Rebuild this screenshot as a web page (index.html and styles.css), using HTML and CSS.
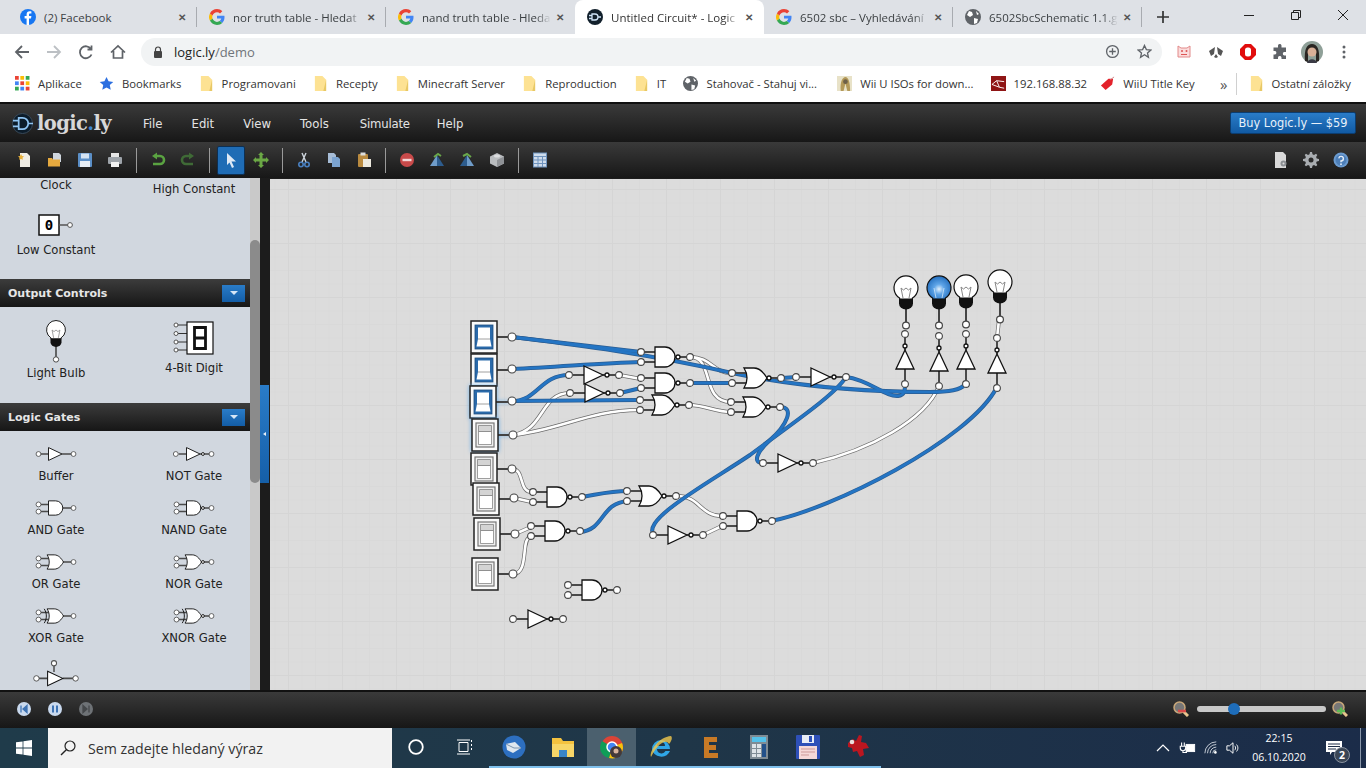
FILE: index.html
```html
<!DOCTYPE html>
<html lang="en">

<head>
    <meta charset="UTF-8">
    <title>Untitled Circuit* - Logic.ly</title>
    <link rel="stylesheet" href="styles.css">
</head>

<body>
    <!-- browser tabs -->
    <div class="tabbar">
        <div class="tab sep">
            <svg class="fav" viewBox="0 0 16 16"><circle cx="8" cy="8" r="8" fill="#1877f2"/><path d="M9 16V9.500h2l.4-2.400H9V5.800c0-.8.3-1.200 1.200-1.200h1.200V2.500C11 2.400 10.400 2.300 9.700 2.300 7.800 2.300 6.600 3.500 6.600 5.500v1.600H4.600v2.400h2V16z" fill="#fff"/></svg>
            <span class="tab-title plain">(2) Facebook</span><span class="tab-x">✕</span>
        </div>
        <div class="tab sep">
            <svg class="fav"><use href="#ic-google"/></svg>
            <span class="tab-title">nor truth table - Hledat</span><span class="tab-x">✕</span>
        </div>
        <div class="tab">
            <svg class="fav"><use href="#ic-google"/></svg>
            <span class="tab-title">nand truth table - Hleda</span><span class="tab-x">✕</span>
        </div>
        <div class="tab active">
            <svg class="fav" viewBox="0 0 16 16"><circle cx="8" cy="8" r="8" fill="#12202c"/><path d="M2 6.500h3M2 9.500h3M5 5h3a3 3 0 0 1 0 6H5zM11 8h3" fill="none" stroke="#cfe4f7" stroke-width="1.300"/></svg>
            <span class="tab-title">Untitled Circuit* - Logic</span><span class="tab-x">✕</span>
        </div>
        <div class="tab sep">
            <svg class="fav"><use href="#ic-google"/></svg>
            <span class="tab-title">6502 sbc – Vyhledávání</span><span class="tab-x">✕</span>
        </div>
        <div class="tab sep">
            <svg class="fav"><use href="#ic-globe"/></svg>
            <span class="tab-title">6502SbcSchematic 1.1.g</span><span class="tab-x">✕</span>
        </div>
        <svg class="tab-new" viewBox="0 0 12 12"><path d="M6 0v12M0 6h12" stroke="#333" stroke-width="1.700" fill="none"/></svg>
        <div class="win-btns">
            <svg viewBox="0 0 12 12"><path d="M1 6.500h10" stroke="#222" fill="none"/></svg>
            <svg viewBox="0 0 12 12"><path d="M1.500 3.500h7v7h-7zM3.500 3.500v-2h7v7h-2" stroke="#222" fill="none"/></svg>
            <svg viewBox="0 0 12 12"><path d="M1 1l10 10M11 1L1 11" stroke="#222" fill="none"/></svg>
        </div>
    </div>

    <!-- address bar -->
    <div class="navbar">
        <svg class="nav-ic" viewBox="0 0 16 16"><path d="M15 8H2M8 2L2 8l6 6" fill="none" stroke="#5f6368" stroke-width="1.800"/></svg>
        <svg class="nav-ic" viewBox="0 0 16 16"><path d="M1 8h13M8 2l6 6-6 6" fill="none" stroke="#bcc0c4" stroke-width="1.800"/></svg>
        <svg class="nav-ic" viewBox="0 0 16 16"><path d="M13.500 10.500A6 6 0 1 1 13 5M13.500 1.500V5.500H9.500" fill="none" stroke="#5f6368" stroke-width="1.800"/></svg>
        <svg class="nav-ic" viewBox="0 0 16 16"><path d="M1 8.500L8 2l7 6.500M3.500 7v7h9V7" fill="none" stroke="#5f6368" stroke-width="1.700"/></svg>
        <div class="omnibox">
            <svg class="lock" viewBox="0 0 10 12"><path d="M2.500 5V3.500a2.500 2.500 0 0 1 5 0V5" fill="none" stroke="#444" stroke-width="1.200"/><rect x="1" y="5" width="8" height="7" rx="1" fill="#444"/></svg>
            <span class="url"><b>logic.ly</b>/demo</span>
            <svg class="omni-ic" viewBox="0 0 16 16"><circle cx="8" cy="8" r="6.300" fill="none" stroke="#5f6368" stroke-width="1.400"/><path d="M8 4.500v7M4.500 8h7" stroke="#5f6368" stroke-width="1.400"/></svg>
            <svg class="omni-ic star" viewBox="0 0 16 16"><path d="M8 1.500l2 4.400 4.800.5-3.600 3.200 1 4.700L8 11.500l-4.200 2.800 1-4.700L1.200 6.400 6 5.900z" fill="none" stroke="#5f6368" stroke-width="1.400"/></svg>
        </div>
        <div class="ext-icons">
            <svg viewBox="0 0 16 16"><path d="M2 2l3 2h6l3-2v11H2z" fill="#fbdcdc" stroke="#e28a8a"/><circle cx="6" cy="7" r="1" fill="#d55"/><circle cx="10.500" cy="7" r="1" fill="#d55"/><path d="M5 10.500h6" stroke="#d55"/></svg>
            <svg viewBox="0 0 16 16"><path d="M7 3L1 7l2 5 3-2zM9 3l6 4-2 5-3-2zM8 10l-2 3 2 1 2-1z" fill="#555"/></svg>
            <svg viewBox="0 0 16 16"><path d="M5 0h6l5 5v6l-5 5H5l-5-5V5z" fill="#e10d0d"/><rect x="5" y="3.500" width="6" height="9" rx="2.500" fill="#fff"/></svg>
            <svg viewBox="0 0 16 16"><path d="M6 1.500a1.800 1.800 0 0 1 3.500 0V3.500H14V8h-1.800a1.800 1.800 0 0 0 0 3.500H14V15H9.500v-1.500a1.800 1.800 0 0 0-3.500 0V15H1.500v-4.500H3a1.800 1.800 0 0 0 0-3.500H1.500V3.500H6z" fill="#5f6368"/></svg>
            <svg class="avatar" viewBox="0 0 22 22"><circle cx="11" cy="11" r="11" fill="#8fa098"/><path d="M4 20C3 8 6 3 11 3s8 5 7 17l-3 1V9H7v12z" fill="#2a2622"/><circle cx="11" cy="11" r="4.500" fill="#d9b097"/><path d="M6 22c1-5 9-5 10 0z" fill="#3a3a44"/></svg>
            <svg viewBox="0 0 16 16"><circle cx="8" cy="3" r="1.500" fill="#5f6368"/><circle cx="8" cy="8" r="1.500" fill="#5f6368"/><circle cx="8" cy="13" r="1.500" fill="#5f6368"/></svg>
        </div>
    </div>

    <!-- bookmarks -->
    <div class="bookmarks">
        <span class="bm"><svg viewBox="0 0 14 14"><g><rect width="3.500" height="3.500" fill="#ea4335"/><rect x="5" width="3.500" height="3.500" fill="#fbbc05"/><rect x="10" width="3.500" height="3.500" fill="#34a853"/><rect y="5" width="3.500" height="3.500" fill="#4285f4"/><rect x="5" y="5" width="3.500" height="3.500" fill="#ea4335"/><rect x="10" y="5" width="3.500" height="3.500" fill="#fbbc05"/><rect y="10" width="3.500" height="3.500" fill="#34a853"/><rect x="5" y="10" width="3.500" height="3.500" fill="#4285f4"/><rect x="10" y="10" width="3.500" height="3.500" fill="#ea4335"/></g></svg>Aplikace</span>
        <span class="bm"><svg viewBox="0 0 16 16"><path d="M8 1l2.200 4.700 5 .6-3.700 3.400 1 5L8 12.300l-4.500 2.400 1-5L.8 6.300l5-.6z" fill="#2c6fe0"/></svg>Bookmarks</span>
        <span class="bm"><svg><use href="#ic-folder"/></svg>Programovani</span>
        <span class="bm"><svg><use href="#ic-folder"/></svg>Recepty</span>
        <span class="bm"><svg><use href="#ic-folder"/></svg>Minecraft Server</span>
        <span class="bm"><svg><use href="#ic-folder"/></svg>Reproduction</span>
        <span class="bm"><svg><use href="#ic-folder"/></svg>IT</span>
        <span class="bm bm-long"><svg><use href="#ic-globe"/></svg>Stahovač - Stahuj vi...</span>
        <span class="bm"><svg viewBox="0 0 16 16"><rect width="16" height="16" fill="#e8e2c8"/><path d="M4 16C3 6 6 1 9 1s5 5 5 15h-3L9 8l-2 8z" fill="#b49a5a"/><circle cx="9" cy="6" r="2.500" fill="#6d6049"/></svg>Wii U ISOs for down...</span>
        <span class="bm"><svg viewBox="0 0 16 16"><rect width="16" height="16" fill="#8f1515"/><path d="M1 9l5-4 8 1M6 5l3 7 5 1M1 9l8 3" fill="none" stroke="#fff" stroke-width="1"/></svg>192.168.88.32</span>
        <span class="bm bm-tag"><svg viewBox="0 0 16 16"><path d="M1 10l8-7 5 0-1 6-7 6z" fill="#e3222b"/><path d="M11 4l4-3" stroke="#c88" stroke-width="1"/></svg>WiiU Title Key</span>
        <span class="bm-more">»</span>
        <span class="bm bm-other"><svg><use href="#ic-folder"/></svg>Ostatní záložky</span>
    </div>

    <!-- app -->
    <div class="app-header">
        <div class="logo">
            <svg viewBox="0 0 22 22"><circle cx="11" cy="11" r="10.500" fill="#0c1c2a" stroke="#3a4c5c"/><path d="M1 8h6M1 14h6M7 5h4a6 6 0 0 1 0 12H7zM17 11h5" fill="none" stroke="#8fc4f2" stroke-width="1.800"/></svg>
            <span class="logo-text">logic<em>.</em>ly</span>
        </div>
        <nav class="menu"><span>File</span><span>Edit</span><span>View</span><span>Tools</span><span class="menu-sim">Simulate</span><span>Help</span></nav>
        <button class="buy" type="button">Buy Logic.ly — $59</button>
    </div>

    <div class="app-tools">
        <svg class="tool" viewBox="0 0 16 16"><path d="M3 1h7l3 3v11H3z" fill="#f0ede4"/><path d="M4 2l1 2 2 .3-1.500 1.500.4 2L4 7l-1.900.8.4-2L1 4.300 3 4z" fill="#e8b13a"/></svg>
        <svg class="tool" viewBox="0 0 16 16"><path d="M6 1h6l2 2v7H6z" fill="#cfd6de"/><path d="M1 6h4l1 1.500h7v7H1z" fill="#e5a93f"/></svg>
        <svg class="tool" viewBox="0 0 16 16"><rect x="1" y="1" width="14" height="14" rx="1" fill="#5b8fc7"/><rect x="4" y="1.500" width="8" height="5" fill="#d5e3f2"/><rect x="3" y="9" width="10" height="6" fill="#e7edf4"/></svg>
        <svg class="tool" viewBox="0 0 16 16"><rect x="4" y="1" width="8" height="5" fill="#e6e6e6"/><rect x="1" y="5" width="14" height="7" rx="1" fill="#9ea4aa"/><rect x="4" y="10" width="8" height="5" fill="#f2f2f2"/></svg>
        <i class="tool-sep"></i>
        <svg class="tool" viewBox="0 0 16 16"><path d="M5 4h5a4 4 0 0 1 0 8H3" fill="none" stroke="#5aa341" stroke-width="2.600"/><path d="M7 .500L2 4l5 3.500z" fill="#5aa341"/></svg>
        <svg class="tool" viewBox="0 0 16 16"><path d="M11 4H6a4 4 0 0 0 0 8h7" fill="none" stroke="#3f6a36" stroke-width="2.600"/><path d="M9 .500L14 4 9 7.500z" fill="#3f6a36"/></svg>
        <i class="tool-sep"></i>
        <span class="tool-on"><svg viewBox="0 0 16 16"><path d="M4 1l9 8.500H8.500L11 15l-2 1-2.500-5.500L4 13z" fill="#dfe9f5"/></svg></span>
        <svg class="tool" viewBox="0 0 16 16"><path d="M8 0l3 3H9.500v3.500H13V5l3 3-3 3V9.500H9.500V13H11l-3 3-3-3h1.500V9.500H3V11L0 8l3-3v1.500h3.500V3H5z" fill="#6ba845"/></svg>
        <i class="tool-sep"></i>
        <svg class="tool" viewBox="0 0 16 16"><path d="M10 1L6 10M6 1l4 9" stroke="#cfd6de" stroke-width="1.400"/><circle cx="5" cy="12.500" r="2.200" fill="none" stroke="#4a80c0" stroke-width="1.600"/><circle cx="11" cy="12.500" r="2.200" fill="none" stroke="#4a80c0" stroke-width="1.600"/></svg>
        <svg class="tool" viewBox="0 0 16 16"><path d="M2 1h6l2 2v8H2z" fill="#a6bcd6"/><path d="M6 5h6l2 2v8H6z" fill="#7ba3d0"/></svg>
        <svg class="tool" viewBox="0 0 16 16"><rect x="2" y="2" width="10" height="13" rx="1" fill="#b98a3f"/><rect x="4.500" y="0.500" width="5" height="3" fill="#ddd"/><rect x="7" y="7" width="8" height="8" fill="#ece9df"/></svg>
        <i class="tool-sep"></i>
        <svg class="tool" viewBox="0 0 16 16"><circle cx="8" cy="8" r="7" fill="#c84a4a"/><rect x="3.500" y="6.800" width="9" height="2.400" fill="#f3d9d9"/></svg>
        <svg class="tool" viewBox="0 0 16 16"><path d="M1 14L8 3v11z" fill="#6f9cc9"/><path d="M15 14L8 3v11z" fill="#2d5c8d"/><path d="M5 5l4-3 3 2" fill="none" stroke="#6aa84a" stroke-width="2"/></svg>
        <svg class="tool" viewBox="0 0 16 16"><path d="M1 14L8 3v11z" fill="#2d5c8d"/><path d="M15 14L8 3v11z" fill="#6f9cc9"/><path d="M4 4l4-2 4 3" fill="none" stroke="#6aa84a" stroke-width="2"/></svg>
        <svg class="tool" viewBox="0 0 16 16"><path d="M8 1l7 3.500v7L8 15l-7-3.500v-7z" fill="#b9bcbf"/><path d="M8 8l7-3.500v7L8 15z" fill="#8f9296"/><ellipse cx="8" cy="4" rx="3" ry="1.500" fill="#dcdddf"/></svg>
        <i class="tool-sep"></i>
        <svg class="tool" viewBox="0 0 16 16"><rect x="1.500" y="1" width="13" height="14" fill="#cfdcec" stroke="#6f93bd"/><path d="M1.500 4.500h13M1.500 8h13M1.500 11.500h13M6 4.500V15M10.500 4.500V15" stroke="#6f93bd"/></svg>
        <div class="tools-right">
            <svg class="tool" viewBox="0 0 16 16"><path d="M2 0h8l3 3v13H2z" fill="#d9d9d9"/><circle cx="10.500" cy="11.500" r="3" fill="#8b8f93"/><circle cx="10.500" cy="11.500" r="1" fill="#ddd"/></svg>
            <svg class="tool" viewBox="0 0 16 16"><path d="M7 0h2l.5 2.300 1.500.6L13 1.700 14.300 3l-1.200 2 .6 1.500L16 7v2l-2.300.5-.6 1.500 1.200 2L13 14.300l-2-1.200-1.500.6L9 16H7l-.5-2.300-1.500-.6-2 1.200L1.700 13l1.200-2-.6-1.500L0 9V7l2.300-.5.6-1.500-1.200-2L3 1.700l2 1.200 1.500-.6z" fill="#a9adb1"/><circle cx="8" cy="8" r="2.500" fill="#2a2a2a"/></svg>
            <svg class="tool" viewBox="0 0 16 16"><circle cx="8" cy="8" r="7.500" fill="#6b9bd0"/><circle cx="8" cy="8" r="5.500" fill="#4c7eb8"/><path d="M5.800 6.300A2.300 2.300 0 1 1 8 9v1.200" fill="none" stroke="#e5eef8" stroke-width="1.400"/><circle cx="8" cy="12.200" r=".9" fill="#e5eef8"/></svg>
        </div>
    </div>

    <div class="workspace">
        <aside class="palette">
            <div class="pal-grid pal-top">
                <div class="pal-item clock"><span>Clock</span></div>
                <div class="pal-item high"><span>High Constant</span></div>
                <div class="pal-item low">
                    <svg class="const-ic" viewBox="0 0 36 22"><rect x="1" y="1" width="20" height="20" fill="#fff" stroke="#111" stroke-width="1.500"/><path d="M21 11h9" stroke="#555" stroke-width="1.500"/><circle cx="32" cy="11" r="2.400" fill="#fff" stroke="#555"/><text x="11" y="16" class="const-txt">0</text></svg>
                    <span>Low Constant</span>
                </div>
            </div>

            <h2 class="pal-head">Output Controls<i class="pal-toggle"></i></h2>
            <div class="pal-grid pal-output">
                <div class="pal-item bulb-item">
                    <svg class="bulb-ic" viewBox="-14 -14 28 56"><use href="#g-bulb"/></svg>
                    <span>Light Bulb</span>
                </div>
                <div class="pal-item digit-item">
                    <svg class="digit-ic" viewBox="0 0 42 34"><g stroke="#333"><path d="M4 4h10M4 12.500h10M4 21h10M4 29h10"/></g><g fill="#fff" stroke="#555"><circle cx="3" cy="4" r="2"/><circle cx="3" cy="12.500" r="2"/><circle cx="3" cy="21" r="2"/><circle cx="3" cy="29" r="2"/></g><rect x="14" y="1" width="26" height="32" fill="#fff" stroke="#111" stroke-width="1.200"/><path d="M21.500 6.500h11v10.500h-11zM21.500 17h11v10.500h-11z" fill="none" stroke="#111" stroke-width="2.800"/></svg>
                    <span>4-Bit Digit</span>
                </div>
            </div>

            <h2 class="pal-head">Logic Gates<i class="pal-toggle"></i></h2>
            <div class="pal-grid pal-gates">
                <div class="pal-item"><svg class="gate-ic" viewBox="-24.500 -14 70 28"><use href="#g-buffer"/></svg><span>Buffer</span></div>
                <div class="pal-item"><svg class="gate-ic" viewBox="-24.500 -14 70 28"><use href="#g-not"/></svg><span>NOT Gate</span></div>
                <div class="pal-item"><svg class="gate-ic" viewBox="-24.500 -14 70 28"><use href="#g-and"/></svg><span>AND Gate</span></div>
                <div class="pal-item"><svg class="gate-ic" viewBox="-24.500 -14 70 28"><use href="#g-nand"/></svg><span>NAND Gate</span></div>
                <div class="pal-item"><svg class="gate-ic" viewBox="-24.500 -14 70 28"><use href="#g-or"/></svg><span>OR Gate</span></div>
                <div class="pal-item"><svg class="gate-ic" viewBox="-24.500 -14 70 28"><use href="#g-nor"/></svg><span>NOR Gate</span></div>
                <div class="pal-item"><svg class="gate-ic" viewBox="-24.500 -14 70 28"><use href="#g-xor"/></svg><span>XOR Gate</span></div>
                <div class="pal-item"><svg class="gate-ic" viewBox="-24.500 -14 70 28"><use href="#g-xnor"/></svg><span>XNOR Gate</span></div>
                <div class="pal-item"><svg class="tri-ic" viewBox="-24.500 -24 70 42"><use href="#g-buffer"/><path d="M8 -8V-17" stroke="#555" stroke-width="2"/><circle cx="8" cy="-19" r="3.200" fill="#fff" stroke="#555" stroke-width="1.300"/></svg></div>
            </div>
        </aside>
        <div class="pal-scroll"><i class="pal-thumb"></i></div>
        <div class="divider"><i class="divider-handle"></i></div>

        <main class="canvas">
            <svg class="circuit" viewBox="270 179 1096 511">
                <defs>
                    <!-- shared favicons -->
                    <symbol id="ic-google" viewBox="0 0 16 16">
                        <path d="M15.500 8.200c0-.6 0-1-.1-1.500H8v2.900h4.300c-.2 1-.7 1.800-1.600 2.400l2.500 1.900c1.500-1.400 2.300-3.400 2.300-5.700z" fill="#4285f4"/>
                        <path d="M8 16c2.200 0 4-.7 5.200-2l-2.500-1.900c-.7.500-1.600.8-2.700.8-2.100 0-3.900-1.400-4.500-3.300L.9 11.600C2.200 14.200 4.900 16 8 16z" fill="#34a853"/>
                        <path d="M3.500 9.600a4.800 4.800 0 0 1 0-3.100L.9 4.400a8 8 0 0 0 0 7.200z" fill="#fbbc05"/>
                        <path d="M8 3.200c1.200 0 2.200.4 3 1.200l2.300-2.200C11.900.8 10.100 0 8 0 4.900 0 2.200 1.800.9 4.400l2.600 2.100C4.100 4.600 5.900 3.200 8 3.200z" fill="#ea4335"/>
                    </symbol>
                    <symbol id="ic-globe" viewBox="0 0 16 16">
                        <circle cx="8" cy="8" r="8" fill="#5f6368"/>
                        <path d="M4 2l3 1 1 3-3 2-3-2zM9 9l4 1-1 4-3 1zM11 2l3 3-2 1z" fill="#fff"/>
                    </symbol>
                    <symbol id="ic-folder" viewBox="0 0 16 16">
                        <path d="M2 0h8l4 4v12H2z" fill="#fde293"/>
                        <path d="M14 4v12H11z" fill="#e8c865"/>
                    </symbol>

                    <!-- circuit parts, origin is the middle of the gate's left edge -->
                    <path id="b-and" d="M0 -10h10a10 10 0 0 1 0 20H0z"/>
                    <path id="b-or" d="M-2 -10h10c6 0 10 5 13 10-3 5-7 10-13 10H-2c4-6 4-14 0-20z"/>

                    <g id="g-buffer" class="part">
                        <path class="stub" d="M-11 0H0M19 0h14"/>
                        <path class="body" d="M0 -9L19 0 0 9z"/>
                        <circle class="pin" cx="-14" cy="0" r="3.400"/>
                        <circle class="pin" cx="35" cy="0" r="3.400"/>
                    </g>
                    <g id="g-not" class="part">
                        <path class="stub" d="M-11 0H0M19 0h14"/>
                        <path class="body" d="M0 -9L19 0 0 9z"/>
                        <circle class="bubble" cx="23" cy="0" r="2"/>
                        <circle class="pin" cx="-15" cy="0" r="3.400"/>
                        <circle class="pin" cx="35" cy="0" r="3.400"/>
                    </g>
                    <g id="g-and" class="part">
                        <path class="stub" d="M-11 -5H2M-11 5H2M20 0h13"/>
                        <use href="#b-and" class="body"/>
                        <circle class="pin" cx="-14" cy="-5" r="3.400"/>
                        <circle class="pin" cx="-14" cy="5" r="3.400"/>
                        <circle class="pin" cx="35" cy="0" r="3.400"/>
                    </g>
                    <g id="g-nand" class="part">
                        <path class="stub" d="M-11 -5H2M-11 5H2M20 0h13"/>
                        <use href="#b-and" class="body"/>
                        <circle class="bubble" cx="23" cy="0" r="2"/>
                        <circle class="pin" cx="-14" cy="-5" r="3.400"/>
                        <circle class="pin" cx="-14" cy="5" r="3.400"/>
                        <circle class="pin" cx="35" cy="0" r="3.400"/>
                    </g>
                    <g id="g-or" class="part">
                        <path class="stub" d="M-11 -5H2M-11 5H2M20 0h13"/>
                        <use href="#b-or" class="body"/>
                        <circle class="pin" cx="-14" cy="-5" r="3.400"/>
                        <circle class="pin" cx="-14" cy="5" r="3.400"/>
                        <circle class="pin" cx="35" cy="0" r="3.400"/>
                    </g>
                    <g id="g-nor" class="part">
                        <path class="stub" d="M-11 -5H2M-11 5H2M20 0h13"/>
                        <use href="#b-or" class="body"/>
                        <circle class="bubble" cx="23" cy="0" r="2"/>
                        <circle class="pin" cx="-14" cy="-5" r="3.400"/>
                        <circle class="pin" cx="-14" cy="5" r="3.400"/>
                        <circle class="pin" cx="35" cy="0" r="3.400"/>
                    </g>
                    <g id="g-xor" class="part">
                        <path class="stub" d="M-11 -5H2M-11 5H2M20 0h13"/>
                        <path class="arc" d="M-6 -10c4 6 4 14 0 20"/>
                        <use href="#b-or" class="body"/>
                        <circle class="pin" cx="-14" cy="-5" r="3.400"/>
                        <circle class="pin" cx="-14" cy="5" r="3.400"/>
                        <circle class="pin" cx="35" cy="0" r="3.400"/>
                    </g>
                    <g id="g-xnor" class="part">
                        <path class="stub" d="M-11 -5H2M-11 5H2M20 0h13"/>
                        <path class="arc" d="M-6 -10c4 6 4 14 0 20"/>
                        <use href="#b-or" class="body"/>
                        <circle class="bubble" cx="23" cy="0" r="2"/>
                        <circle class="pin" cx="-14" cy="-5" r="3.400"/>
                        <circle class="pin" cx="-14" cy="5" r="3.400"/>
                        <circle class="pin" cx="35" cy="0" r="3.400"/>
                    </g>
                    <!-- bulb, origin at centre of the glass -->
                    <g id="g-bulb">
                        <path d="M0 20V36" stroke="#444" stroke-width="2"/>
                        <path d="M-6.500 10a12 12 0 1 1 13 0l-.5 2h-12z" fill="#fff" stroke="#111" stroke-width="1.200"/>
                        <path d="M-5 0l2 10M5 0l-2 10M-5 0l2.500 2 2.500-2 2.500 2L5 0" fill="none" stroke="#888"/>
                        <path d="M-7 10.500h14v5a7 6 0 0 1-14 0z" fill="#111"/>
                        <circle cx="0" cy="37.500" r="3.400" fill="#fff" stroke="#444" stroke-width="1.200"/>
                    </g>
                    <radialGradient id="glow" cx=".5" cy=".55" r=".6">
                        <stop offset="0" stop-color="#e2f0fc"/>
                        <stop offset=".35" stop-color="#5fa5e8"/>
                        <stop offset="1" stop-color="#1a66b8"/>
                    </radialGradient>
                    <g id="g-bulb-on">
                        <path d="M0 20V36" stroke="#444" stroke-width="2"/>
                        <path d="M-6.500 10a12 12 0 1 1 13 0l-.5 2h-12z" fill="url(#glow)" stroke="#111" stroke-width="1.200"/>
                        <path d="M-5 0l2 10M5 0l-2 10" fill="none" stroke="#cfe4f8" stroke-width=".8"/>
                        <path d="M-7 10.500h14v5a7 6 0 0 1-14 0z" fill="#111"/>
                        <circle cx="0" cy="37.500" r="3.400" fill="#fff" stroke="#444" stroke-width="1.200"/>
                    </g>
                    <!-- switches, origin at top left of the box -->
                    <g id="g-sw-on">
                        <path d="M27 17H40" stroke="#444" stroke-width="2"/>
                        <rect x="1" y="1" width="26" height="32" fill="#fafafa" stroke="#222" stroke-width="1.500"/>
                        <rect x="5" y="5" width="18" height="24" fill="#2a6aaa" stroke="#1d4d7e" stroke-width=".8"/>
                        <path d="M8 7.500h12v11.500l1.500 7.500h-15l1.500-7.500z" fill="#fff"/>
                        <path d="M8 19h12" stroke="#888" stroke-width=".8"/>
                    </g>
                    <g id="g-sw-off">
                        <path d="M27 17H40" stroke="#444" stroke-width="2"/>
                        <rect x="1" y="1" width="26" height="32" fill="#fafafa" stroke="#222" stroke-width="1.500"/>
                        <rect x="5" y="5" width="18" height="24" fill="#efefef" stroke="#777" stroke-width="1.200"/>
                        <path d="M7.500 7.500h13v6h-13z" fill="#d4d4d4" stroke="#777" stroke-width=".7"/>
                        <path d="M7.500 13.500h13v13h-13z" fill="#fff" stroke="#777" stroke-width=".7"/>
                    </g>

                    <!-- wires -->
                    <g id="wires-on">
                        <path d="M512 337L641 352"/>
                        <path d="M512 337C560 343 640 352 732 373C790 385 860 392 930 392C950 392 960 390 966 384"/>
                        <path d="M512 369C560 367 600 363 641 362"/>
                        <path d="M512 401L639 400"/>
                        <path d="M512 401C538 401 540 375 569 375"/>
                        <path d="M620 393L641 388"/>
                        <path d="M691 383L732 383"/>
                        <path d="M782 378L797 377"/>
                        <path d="M846 377C870 380 885 397 898 396C905 395 905 390 905 384"/>
                        <path d="M846 377C835 395 790 425 750 455C710 482 640 520 654 535"/>
                        <path d="M780 407C795 407 787 425 770 440C757 452 752 463 763 463"/>
                        <path d="M771 521C830 510 970 440 997 387"/>
                        <path d="M582 497C600 494 610 491 628 491"/>
                        <path d="M580 532C605 530 600 503 628 501"/>
                    </g>
                    <g id="wires-off">
                        <path d="M513 435C560 430 590 410 639 410"/>
                        <path d="M513 435C545 430 540 393 570 393"/>
                        <path d="M619 375L641 379"/>
                        <path d="M690 357C715 357 700 402 731 402"/>
                        <path d="M690 357C712 357 712 373 732 373"/>
                        <path d="M689 405C705 405 715 412 731 412"/>
                        <path d="M512 469C525 469 518 492 532 492"/>
                        <path d="M514 498L532 502"/>
                        <path d="M515 534L531 527"/>
                        <path d="M513 574C530 574 520 537 531 537"/>
                        <path d="M677 496C700 496 700 516 722 516"/>
                        <path d="M703 535L722 526"/>
                        <path d="M813 463C870 450 925 420 939 386"/>
                        <path d="M997 338L999 320"/>
                    </g>
                </defs>

                <use href="#wires-off" class="wire-off-case"/>
                <use href="#wires-off" class="wire-off"/>
                <use href="#wires-on" class="wire-on-case"/>
                <use href="#wires-on" class="wire-on"/>

                <use href="#g-sw-on" transform="translate(470 320)"/>
                <use href="#g-sw-on" transform="translate(470 353)"/>
                <use href="#g-sw-on" transform="translate(469 385)" class="sw-sel"/>
                <use href="#g-sw-off" transform="translate(471 418)" class="sw-sel"/>
                <use href="#g-sw-off" transform="translate(470 452)"/>
                <use href="#g-sw-off" transform="translate(472 482)"/>
                <use href="#g-sw-off" transform="translate(473 517)"/>
                <use href="#g-sw-off" transform="translate(471 557)"/>
                <circle class="pin big" cx="512" cy="337" r="4"/>
                <circle class="pin big" cx="512" cy="369" r="4"/>
                <circle class="pin big" cx="512" cy="401" r="4"/>
                <circle class="pin big" cx="513" cy="435" r="4"/>
                <circle class="pin big" cx="512" cy="469" r="4"/>
                <circle class="pin big" cx="514" cy="498" r="4"/>
                <circle class="pin big" cx="515" cy="534" r="4"/>
                <circle class="pin big" cx="513" cy="574" r="4"/>

                <use href="#g-nand" transform="translate(655 357)"/>
                <use href="#g-nand" transform="translate(655 383)"/>
                <use href="#g-nor" transform="translate(654 405)"/>
                <use href="#g-not" transform="translate(584 375)"/>
                <use href="#g-not" transform="translate(585 393)"/>
                <use href="#g-nor" transform="translate(746 378)"/>
                <use href="#g-nor" transform="translate(745 407)"/>
                <use href="#g-not" transform="translate(811 377)"/>
                <use href="#g-not" transform="translate(778 463)"/>
                <use href="#g-nand" transform="translate(547 497)"/>
                <use href="#g-nand" transform="translate(545 531)"/>
                <use href="#g-nor" transform="translate(641 496)"/>
                <use href="#g-nand" transform="translate(737 521)"/>
                <use href="#g-not" transform="translate(668 535)"/>
                <use href="#g-nand" transform="translate(582 590)"/>
                <use href="#g-not" transform="translate(528 619)"/>

                <use href="#g-not" transform="translate(905 369) rotate(-90)"/>
                <use href="#g-not" transform="translate(939 371) rotate(-90)"/>
                <use href="#g-not" transform="translate(966 369) rotate(-90)"/>
                <use href="#g-not" transform="translate(997 373) rotate(-90)"/>
                <use href="#g-bulb" transform="translate(906 288)"/>
                <use href="#g-bulb-on" transform="translate(939 288)"/>
                <use href="#g-bulb" transform="translate(966 287)"/>
                <use href="#g-bulb" transform="translate(1000 282)"/>
            </svg>
        </main>
    </div>

    <div class="app-footer">
        <svg class="play" viewBox="0 0 14 14"><circle cx="7" cy="7" r="7" fill="#c9d9ee"/><path d="M4 3.500v7M10 3.500L6 7l4 3.500z" stroke="#3e73b3" stroke-width="1.300" fill="#3e73b3"/></svg>
        <svg class="play" viewBox="0 0 14 14"><circle cx="7" cy="7" r="7" fill="#c9d9ee"/><path d="M5 3.500v7M9 3.500v7" stroke="#3e73b3" stroke-width="2"/></svg>
        <svg class="play" viewBox="0 0 14 14"><circle cx="7" cy="7" r="7" fill="#6e7276"/><path d="M10 3.500v7M4 3.500L8 7l-4 3.500z" stroke="#45484b" stroke-width="1.300" fill="#45484b"/></svg>
        <div class="zoom-ctl">
            <svg class="zoom-ic" viewBox="0 0 16 16"><path d="M10 10l5 5" stroke="#e8c58e" stroke-width="3"/><circle cx="6.500" cy="6.500" r="5.500" fill="#777" stroke="#c8a77a" stroke-width="1.500"/><path d="M5 10h8" stroke="#d84848" stroke-width="2.600"/></svg>
            <div class="zoom-track"><i class="zoom-thumb"></i></div>
            <svg class="zoom-ic plus" viewBox="0 0 16 16"><path d="M10 10l5 5" stroke="#e8c58e" stroke-width="3"/><circle cx="6.500" cy="6.500" r="5.500" fill="#777" stroke="#c8a77a" stroke-width="1.500"/><path d="M5 10h8M9 6.500v7" stroke="#5dbb55" stroke-width="2.400"/></svg>
        </div>
    </div>

    <!-- windows taskbar -->
    <footer class="taskbar">
        <svg class="win-logo" viewBox="0 0 16 16"><path d="M0 2.300L6.600 1.400V7.600H0zM7.400 1.300L16 0V7.600H7.400zM0 8.400H6.600V14.600L0 13.700zM7.400 8.400H16V16L7.400 14.700z" fill="#fff"/></svg>
        <div class="search">
            <svg viewBox="0 0 16 16"><circle cx="10" cy="6" r="5" fill="none" stroke="#222" stroke-width="1.200"/><path d="M6.300 9.700L1 15" stroke="#222" stroke-width="1.400"/></svg>
            <span>Sem zadejte hledaný výraz</span>
        </div>
        <div class="task-apps">
            <span class="task"><svg viewBox="0 0 16 16"><circle cx="8" cy="8" r="6.800" fill="none" stroke="#fff" stroke-width="1.800"/></svg></span>
            <span class="task"><svg viewBox="0 0 16 16"><path d="M2 3.500h9v9H2zM0 1h13M0 15h13M14.500 1v2M14.500 5v2M14.500 9v2" fill="none" stroke="#fff"/></svg></span>
            <span class="task on"><svg class="big" viewBox="0 0 24 24"><circle cx="12" cy="12" r="11.500" fill="#2d6fc0"/><path d="M4 9l9-2 6 6-8 5-6-3z" fill="#dfe7ef"/><path d="M4 9l8 4 7 0" fill="none" stroke="#7a93ad"/></svg></span>
            <span class="task on"><svg class="big" viewBox="0 0 24 24"><path d="M1 3h9l2 3h11v16H1z" fill="#f4c23f"/><path d="M1 9h22v13H1z" fill="#f7d668"/><rect x="8" y="15" width="8" height="7" fill="#3a86c8"/></svg></span>
            <span class="task on current"><svg class="big" viewBox="0 0 24 24"><circle cx="12" cy="12" r="11" fill="#dc4437"/><path d="M12 12L22 8A11 11 0 0 1 9 23z" fill="#f4c20d"/><path d="M12 12L9 23A11 11 0 0 1 2 6z" fill="#0f9d58"/><circle cx="12" cy="12" r="5" fill="#4285f4" stroke="#fff" stroke-width="1.500"/><circle cx="16" cy="17" r="6" fill="#43393a"/><circle cx="16" cy="16" r="2.500" fill="#d8b39c"/></svg></span>
            <span class="task on"><svg class="big" viewBox="0 0 24 24"><path d="M3 14a9 9 0 1 1 18 0H8a4.500 4.500 0 0 0 8.500 2H21a9.500 9.500 0 0 1-18-2zM8 11h8a4 4 0 0 0-8 0z" fill="#2fa6e6"/><path d="M2 22C0 16 10 2 22 1c2 2 0 6-2 8-1-3-8-6-18 13z" fill="#f2c94c" opacity=".8"/></svg></span>
            <span class="task on"><svg class="big" viewBox="0 0 24 24"><path d="M6 2h13v5h-8v3h7v5h-7v3h9v5H6z" fill="#c87a26"/></svg></span>
            <span class="task on"><svg class="big" viewBox="0 0 24 24"><rect x="3" y="0" width="18" height="24" fill="#7f8c95"/><rect x="5" y="2" width="14" height="5" fill="#54c1ea"/><path d="M5 9h4v4H5zM10 9h4v4h-4zM5 14h4v4H5zM10 14h4v4h-4zM5 19h4v3H5zM10 19h4v3h-4z" fill="#dde3e7"/><rect x="15" y="9" width="4" height="13" fill="#23518a"/></svg></span>
            <span class="task on"><svg class="big" viewBox="0 0 24 24"><rect width="24" height="24" rx="1" fill="#2e50b8"/><rect x="6" y="0" width="12" height="8" fill="#e8edf7"/><rect x="13" y="1" width="3" height="6" fill="#2e50b8"/><rect x="3" y="11" width="18" height="13" fill="#f4d8d8"/><path d="M5 14h14M5 17h14M5 20h8" stroke="#c99"/></svg></span>
            <span class="task on"><svg class="big" viewBox="0 0 24 24"><path d="M3 8l5-4 3 2 3-6 3 1-1 6 5 1 3 5-6 1 1 6-4 2-3-6-4 1-1-4-4-1z" fill="#bb1620"/><circle cx="7" cy="7" r="2.300" fill="#e9dede"/></svg></span>
        </div>
        <div class="tray">
            <svg viewBox="0 0 14 14"><path d="M1 10l6-6 6 6" fill="none" stroke="#fff" stroke-width="1.200"/></svg>
            <svg class="wide" viewBox="0 0 20 14"><path d="M4 1v4M7 1v4M2.500 5h6v2a3 3 0 0 1-6 0zM5.500 10v2H10" fill="none" stroke="#fff" stroke-width="1.200"/><rect x="9" y="3" width="9.500" height="8" fill="#fff" stroke="#fff"/></svg>
            <svg viewBox="0 0 16 16"><path d="M1 14A13 13 0 0 1 14 1M4 14A10 10 0 0 1 14 4M7 14A7 7 0 0 1 14 7M10 14A4 4 0 0 1 14 10" fill="none" stroke="#d6dbe3"/><circle cx="13" cy="13" r="1.500" fill="#fff"/></svg>
            <svg viewBox="0 0 16 16"><path d="M1 5.500h3L8 2v12L4 10.500H1z" fill="none" stroke="#fff" stroke-width="1.100"/><path d="M10 5.500c1.300 1.300 1.300 3.700 0 5M12 4c2.200 2.200 2.200 5.800 0 8" fill="none" stroke="#fff"/></svg>
        </div>
        <div class="clock-box">
            <span>22:15</span>
            <span>06.10.2020</span>
        </div>
        <div class="notify">
            <svg viewBox="0 0 16 14"><path d="M0 0h16v11H6L4 14v-3H0z" fill="#fff"/><path d="M2 3h12M2 5.500h12M2 8h8" stroke="#1c2d48"/></svg>
            <b class="notify-count">2</b>
        </div>
        <i class="show-desktop"></i>
    </footer>
</body>

</html>
```

FILE: styles.css
```css
* {
    box-sizing: border-box;
}

html,
body {
    margin: 0;
    padding: 0;
    width: 1366px;
    height: 768px;
    overflow: hidden;
}

body {
    display: flex;
    flex-direction: column;
    font-family: 'Open Sans', 'Noto Sans', sans-serif;
    background-color: #fff;
}

svg {
    display: block;
    flex: none;
}

/* browser chrome */
.tabbar {
    height: 34px;
    background-color: #dee1e6;
    display: flex;
    align-items: center;
    padding-left: 8px;
    font-size: 11.500px;
    color: #3c4043;
}

.tab {
    width: 189px;
    height: 34px;
    display: flex;
    align-items: center;
    padding: 0 8px 0 12px;
    gap: 8px;
}

.tab.sep {
    background: linear-gradient(#a8abb0, #a8abb0) right center / 1px 20px no-repeat;
}

.tab.active {
    background-color: #fff;
    border-radius: 8px 8px 0 0;
    color: #333;
}

.fav {
    width: 16px;
    height: 16px;
}

.tab-title {
    flex: 1;
    white-space: nowrap;
    overflow: hidden;
    -webkit-mask-image: linear-gradient(90deg, #000 88%, transparent);
    mask-image: linear-gradient(90deg, #000 88%, transparent);
}

.tab-title.plain {
    -webkit-mask-image: none;
    mask-image: none;
}

.tab-x {
    font-size: 10px;
    font-weight: 700;
    color: #555;
    width: 14px;
    margin-left: -6px;
    text-align: center;
}

.tab-new {
    width: 12px;
    height: 12px;
    margin-left: 15px;
}

.win-btns {
    margin-left: auto;
    display: flex;
    gap: 35px;
    padding-right: 17px;
    margin-top: -4px;
}

.win-btns svg {
    width: 12px;
    height: 12px;
}

.navbar {
    height: 36px;
    display: flex;
    align-items: center;
    padding-left: 14px;
    gap: 16px;
    background-color: #fff;
}

.nav-ic {
    width: 16px;
    height: 16px;
}

.omnibox {
    width: 1021px;
    height: 28px;
    margin-left: -1px;
    border-radius: 14px;
    background-color: #f1f3f4;
    display: flex;
    align-items: center;
    padding-left: 12px;
    font-size: 13px;
    color: #70757a;
}

.lock {
    width: 10px;
    height: 12px;
    margin-right: 11px;
}

.url {
    flex: 1;
}

.url b {
    font-weight: 400;
    color: #222;
}

.omni-ic {
    width: 15px;
    height: 15px;
    margin-right: 17px;
}

.omni-ic.star {
    margin-right: 10px;
}

.ext-icons {
    display: flex;
    align-items: center;
    gap: 16px;
    margin-left: -2px;
}

.ext-icons svg {
    width: 16px;
    height: 16px;
}

.ext-icons .avatar {
    width: 22px;
    height: 22px;
    margin: 0 -3px;
}

.bookmarks {
    height: 32px;
    padding: 0 0 4px 15px;
    display: flex;
    align-items: center;
    font-size: 11.300px;
    color: #333;
    gap: 17.200px;
    background-color: #fff;
}

.bm {
    display: flex;
    align-items: center;
    gap: 8px;
    white-space: nowrap;
}

.bm svg {
    width: 15px;
    height: 15px;
}

.bm-long {
    margin-right: 3px;
}

.bm-tag {
    margin-left: -4px;
}

.bm-more {
    margin-left: 8px;
    font-size: 15px;
    color: #555;
    padding-right: 9px;
    border-right: 1px solid #d0d0d0;
    line-height: 22px;
}

.bm-other {
    margin-left: -6px;
}

/* logic.ly */
.app-header {
    height: 41px;
    border-top: 2px solid #101010;
    background: linear-gradient(#3a3a3a, #171717);
    display: flex;
    align-items: center;
    padding: 0 10px 0 12px;
    color: #e4e4e4;
}

.logo {
    display: flex;
    align-items: center;
    gap: 4px;
    width: 131px;
}

.logo svg {
    width: 21px;
    height: 21px;
}

.logo-text {
    font-family: 'DejaVu Serif', serif;
    font-weight: 700;
    font-size: 19.500px;
    color: #d8d8d8;
    letter-spacing: -.6px;
}

.logo-text em {
    font-style: normal;
    color: #3f86d0;
}

.menu {
    display: flex;
    gap: 29px;
    padding-top: 1px;
    font-family: 'DejaVu Sans', sans-serif;
    font-size: 11.700px;
}

.menu-sim {
    margin: 0 -2px 0 2px;
    letter-spacing: -.2px;
}

.buy {
    margin-left: auto;
    width: 126px;
    height: 22px;
    border: 1px solid #0c3d70;
    border-radius: 2px;
    background: linear-gradient(#2a7cc8, #115aa3);
    color: #e8f1fa;
    font-family: 'DejaVu Sans', sans-serif;
    font-size: 11.400px;
    padding: 0;
}

.app-tools {
    height: 36px;
    background: linear-gradient(#3a3a3a, #171717);
    display: flex;
    align-items: center;
    padding: 0 17px;
    gap: 14px;
}

.tool {
    width: 16px;
    height: 16px;
}

.tool-sep {
    width: 1px;
    height: 25px;
    background-color: #9a9a9a;
    margin: 0 -1px;
}

.tool-on {
    width: 28px;
    height: 29px;
    margin: 0 -6px;
    display: flex;
    align-items: center;
    justify-content: center;
    background-color: #1f6cb5;
    border: 1px solid #0d2f52;
    border-radius: 2px;
}

.tool-on svg {
    width: 16px;
    height: 16px;
}

.tools-right {
    margin-left: auto;
    display: flex;
    gap: 14px;
}

.workspace {
    height: 512px;
    display: flex;
    background-color: #1c1c1c;
}

.palette {
    width: 250px;
    overflow: hidden;
    background-color: #d1d7df;
    font-family: 'DejaVu Sans', sans-serif;
    font-size: 11.600px;
    color: #222;
}

.pal-grid {
    display: grid;
    grid-template-columns: 112px 112px;
    column-gap: 26px;
}

.pal-item {
    display: flex;
    flex-direction: column;
    align-items: center;
}

.pal-top {
    height: 101px;
    align-content: start;
}

.pal-head {
    margin: 0;
    height: 28px;
    padding: 0 0 0 8px;
    display: flex;
    align-items: center;
    justify-content: space-between;
    background: linear-gradient(#3c3c3c, #161616);
    color: #e6e6e6;
    font-size: 11px;
    font-weight: 700;
}

.pal-toggle {
    width: 23px;
    height: 17px;
    margin-right: 5px;
    background: linear-gradient(#2a7cc8, #135da6);
    display: flex;
    align-items: center;
    justify-content: center;
}

.pal-toggle::after {
    content: '';
    border: 4px solid transparent;
    border-top: 4px solid #d6e6f6;
    border-bottom: none;
}

.clock span {
    line-height: 14px;
}

.high span {
    line-height: 14px;
    margin-top: 4px;
}

.low {
    grid-column: 1;
    margin-top: 18px;
}

.const-ic {
    width: 36px;
    height: 22px;
}

.const-txt {
    font-family: 'DejaVu Sans Mono', monospace;
    font-weight: 700;
    font-size: 14px;
    text-anchor: middle;
}

.low span {
    margin-top: 7px;
}

.pal-output {
    height: 96px;
    padding-top: 12px;
}

.bulb-ic {
    width: 22px;
    height: 44px;
}

.bulb-item span {
    margin-top: 3px;
}

.digit-ic {
    width: 42px;
    height: 34px;
    margin-top: 2px;
}

.digit-item span {
    margin-top: 6px;
}

.pal-gates {
    padding-top: 13px;
    grid-auto-rows: 54px;
}

.gate-ic {
    width: 50px;
    height: 20px;
}

.pal-gates span {
    margin-top: 5px;
}

.tri-ic {
    width: 56px;
    height: 34px;
    margin-top: -1px;
}

.part .stub {
    fill: none;
    stroke: #4a4a4a;
    stroke-width: 2;
}

.part .body {
    fill: #fff;
    stroke: #111;
    stroke-width: 1.300;
}

.part .arc {
    fill: none;
    stroke: #111;
    stroke-width: 1.300;
}

.part .bubble {
    fill: #fff;
    stroke: #111;
    stroke-width: 1.300;
}

.pin {
    fill: #fff;
    stroke: #444;
    stroke-width: 1.100;
}

.sw-sel {
    filter: drop-shadow(0 0 2px #6aaee8);
}

.pal-scroll {
    width: 10px;
    background-color: #c9c9c9;
    padding-top: 62px;
}

.pal-thumb {
    display: block;
    height: 243px;
    background-color: #8b8b8b;
    border-radius: 5px;
}

.divider {
    width: 10px;
    background-color: #1c1c1c;
    padding-top: 207px;
}

.divider-handle {
    display: flex;
    align-items: center;
    justify-content: center;
    width: 9px;
    height: 98px;
    background: linear-gradient(#2a7cc8, #155fa8);
}

.divider-handle::after {
    content: '';
    border: 2px solid transparent;
    border-right: 3px solid #e8f1fa;
    border-left: none;
}

.canvas {
    flex: 1;
    border-top: 1px solid #1c1c1c;
    background-color: #dcdcdc;
    background-image:
        linear-gradient(#d5d5d5 1px, transparent 1px),
        linear-gradient(90deg, #d5d5d5 1px, transparent 1px),
        linear-gradient(#d9d9d9 1px, transparent 1px),
        linear-gradient(90deg, #d9d9d9 1px, transparent 1px);
    background-size: 54px 54px, 54px 54px, 13.500px 13.500px, 13.500px 13.500px;
    background-position: 0 10px, 18px 0, 0 10px, 18px 0;
}

.circuit {
    width: 1096px;
    height: 511px;
}

.wire-on-case {
    fill: none;
    stroke: #2b5d92;
    stroke-width: 4;
}

.wire-on {
    fill: none;
    stroke: #2475c4;
    stroke-width: 2.600;
}

.wire-off-case {
    fill: none;
    stroke: #6c6c6c;
    stroke-width: 4;
}

.wire-off {
    fill: none;
    stroke: #fff;
    stroke-width: 2.600;
}

.app-footer {
    height: 38px;
    border-top: 2px solid #111;
    background: linear-gradient(#3a3a3a, #171717);
    display: flex;
    align-items: center;
    padding: 0 18px 2px 17px;
    gap: 17px;
}

.play {
    width: 14px;
    height: 14px;
}

.zoom-ctl {
    margin-left: auto;
    display: flex;
    align-items: center;
    gap: 8px;
}

.zoom-ic {
    width: 16px;
    height: 16px;
}

.zoom-ic.plus {
    margin-left: -2px;
}

.zoom-track {
    width: 129px;
    height: 6px;
    border-radius: 3px;
    background-color: #c8c8c8;
    display: flex;
    align-items: center;
    padding-left: 31px;
}

.zoom-thumb {
    width: 12px;
    height: 12px;
    border-radius: 50%;
    background-color: #1e6dba;
}

/* windows taskbar */
.taskbar {
    height: 40px;
    background: linear-gradient(90deg, #1f3b4a, #1f3648 50%, #1b2c49);
    display: flex;
    align-items: center;
    color: #fff;
}

.win-logo {
    width: 16px;
    height: 16px;
    margin: 0 16px;
}

.search {
    width: 344px;
    height: 40px;
    background-color: #f2f2f2;
    color: #333;
    display: flex;
    align-items: center;
    padding-left: 12px;
    gap: 12px;
    font-size: 14.200px;
}

.search svg {
    width: 16px;
    height: 16px;
}

.task-apps {
    display: flex;
    margin-left: -1px;
}

.task {
    width: 49px;
    height: 40px;
    display: flex;
    align-items: center;
    justify-content: center;
    border-bottom: 2px solid transparent;
}

.task svg {
    width: 16px;
    height: 16px;
}

.task svg.big {
    width: 24px;
    height: 24px;
}

.task.on {
    border-bottom-color: #7fc0ec;
    background-clip: padding-box;
}

.task.current {
    background-color: #4b606e;
}

.tray {
    margin-left: auto;
    display: flex;
    align-items: center;
    gap: 8px;
}

.tray svg {
    width: 14px;
    height: 14px;
}

.tray svg.wide {
    width: 18px;
}

.clock-box {
    width: 70px;
    margin-left: 4px;
    display: flex;
    flex-direction: column;
    align-items: center;
    font-size: 10.500px;
    line-height: 19px;
}

.notify {
    width: 42px;
    margin-left: 4px;
    position: relative;
    padding-left: 8px;
}

.notify svg {
    width: 16px;
    height: 14px;
}

.notify-count {
    position: absolute;
    left: 16px;
    top: 6px;
    width: 16px;
    height: 16px;
    border-radius: 50%;
    background-color: #3a4656;
    border: 1px solid #8a93a0;
    font-size: 10.500px;
    line-height: 14px;
    text-align: center;
}

.show-desktop {
    width: 1px;
    height: 40px;
    background-color: #8a97aa;
    margin-right: 5px;
}
```
